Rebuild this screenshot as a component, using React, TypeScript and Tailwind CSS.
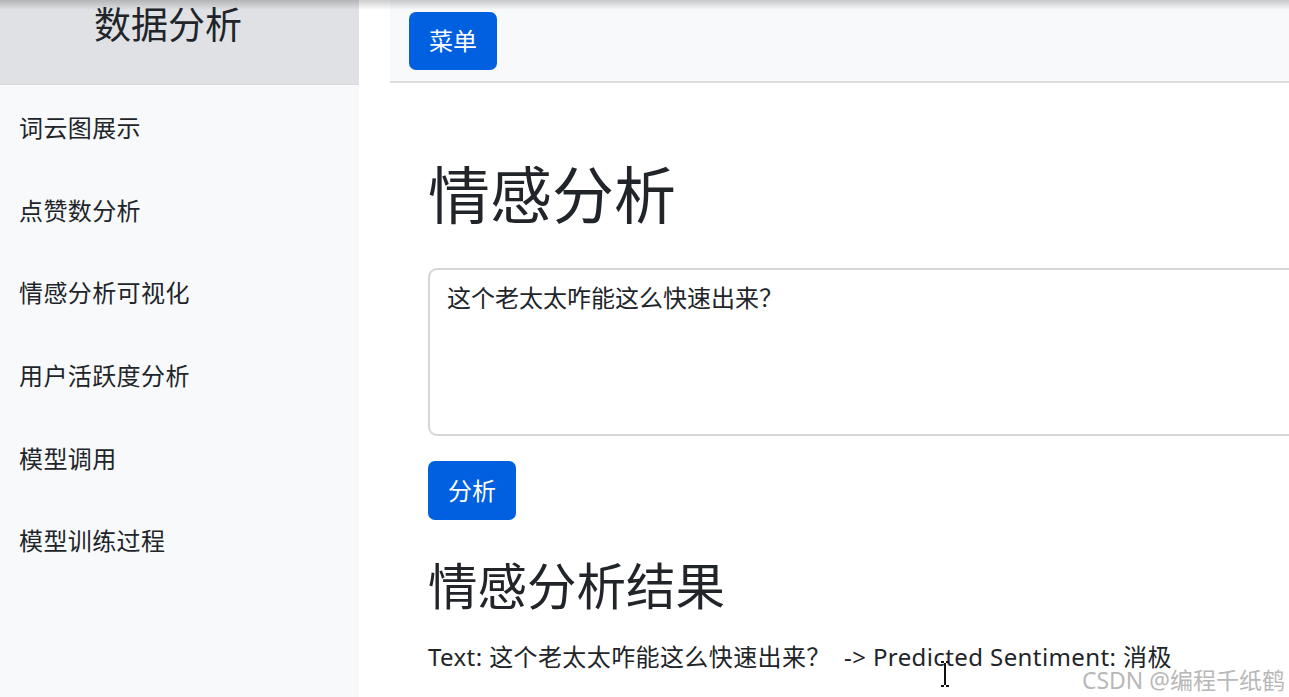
import React from "react";

const font = {
  fontFamily:
    '"Noto Sans", "Noto Sans CJK SC", "Liberation Sans", sans-serif',
};

const items = [
  "词云图展示",
  "点赞数分析",
  "情感分析可视化",
  "用户活跃度分析",
  "模型调用",
  "模型训练过程",
];

export default function App() {
  return (
    <div
      className="relative flex h-[697px] w-[1289px] overflow-hidden bg-white text-[#212529]"
      style={font}
    >
      {/* Sidebar */}
      <aside className="flex w-[359px] shrink-0 flex-col bg-[#f8f9fa]">
        <div className="flex h-[85px] items-start justify-center border-b border-[#d6d8db] bg-[#dfe1e4] pr-[23px] pt-[3px]">
          <h4 className="text-[37px] leading-[1.2] font-normal">数据分析</h4>
        </div>
        <nav className="flex flex-col pt-[2px]">
          {items.map((t) => (
            <div
              key={t}
              className="flex h-[82.6px] items-center pl-[19px] text-[24px] leading-[36px] tracking-[0.4px]"
            >
              {t}
            </div>
          ))}
        </nav>
      </aside>

      {/* Gap */}
      <div className="w-[31px] shrink-0 bg-white" />

      {/* Main */}
      <main className="flex min-w-0 flex-1 flex-col">
        <div className="flex h-[83px] shrink-0 items-center border-b-2 border-[#dedede] bg-[#f8f9fa] pl-[19px]">
          <button className="h-[58px] w-[88px] rounded-[7px] bg-[#0060df] text-[24px] text-white">
            菜单
          </button>
        </div>

        <div className="flex flex-col pl-[38px]">
          <h1 className="mt-[76px] text-[62px] leading-[72px] font-normal">
            情感分析
          </h1>
          <div className="mt-[37px] h-[168px] w-[900px] rounded-[9px] border-2 border-[#d5d5d8] pl-[17px] pt-[10px] text-[24px] leading-[36px]">
            这个老太太咋能这么快速出来？
          </div>
          <button className="mt-[25px] h-[59px] w-[88px] rounded-[7px] bg-[#0060df] text-[24px] text-white">
            分析
          </button>
          <h2 className="mt-[37px] text-[49.5px] leading-[58px] font-normal">
            情感分析结果
          </h2>
          <p className="mt-[24px] text-[24px] leading-[36px] tracking-[0.4px] whitespace-pre">
            Text: 这个老太太咋能这么快速出来？  -&gt; Predicted Sentiment: 消极
          </p>
        </div>
      </main>

      {/* top shadow artifact */}
      <div className="pointer-events-none absolute left-0 top-0 h-[10px] w-full bg-gradient-to-b from-black/20 to-transparent" />

      {/* watermark */}
      <div className="pointer-events-none absolute bottom-[5px] right-[4px] text-[23px] leading-none text-[#b8b8b8]">
        CSDN @编程千纸鹤
      </div>

      {/* text cursor */}
      <svg
        className="pointer-events-none absolute left-[938px] top-[660px]"
        width="14"
        height="28"
        viewBox="0 0 14 28"
      >
        <path
          d="M3 2h3M8 2h3M7 3v22M3 26h3M8 26h3"
          stroke="#111"
          strokeWidth="2"
          fill="none"
        />
      </svg>
    </div>
  );
}
